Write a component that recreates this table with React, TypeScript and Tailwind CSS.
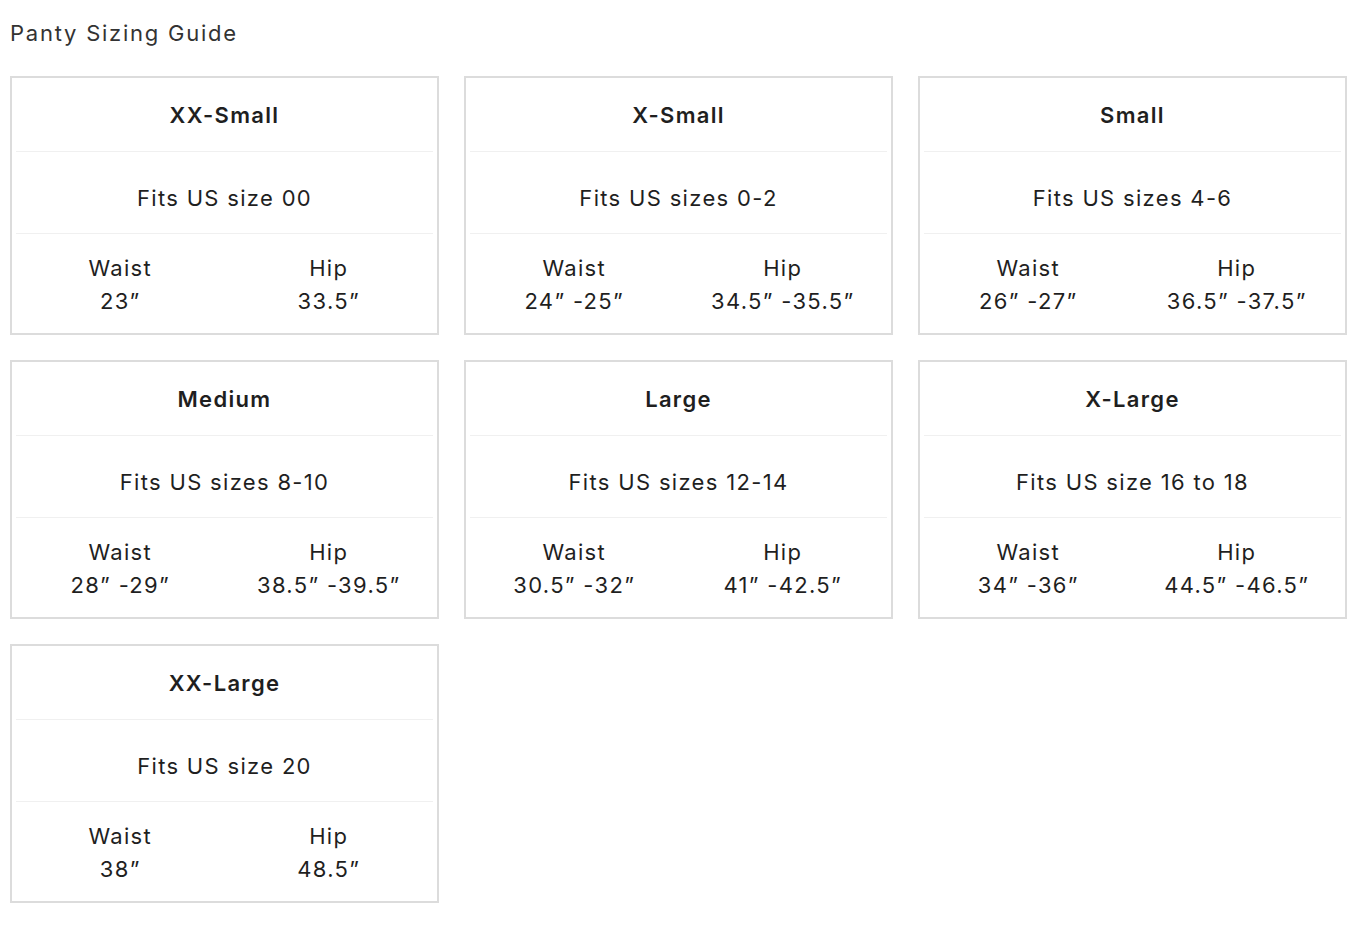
const sizes = [
  { name: "XX-Small", fits: "Fits US size 00", waist: "23”", hip: "33.5”" },
  { name: "X-Small", fits: "Fits US sizes 0-2", waist: "24” -25”", hip: "34.5” -35.5”" },
  { name: "Small", fits: "Fits US sizes 4-6", waist: "26” -27”", hip: "36.5” -37.5”" },
  { name: "Medium", fits: "Fits US sizes 8-10", waist: "28” -29”", hip: "38.5” -39.5”" },
  { name: "Large", fits: "Fits US sizes 12-14", waist: "30.5” -32”", hip: "41” -42.5”" },
  { name: "X-Large", fits: "Fits US size 16 to 18", waist: "34” -36”", hip: "44.5” -46.5”" },
  { name: "XX-Large", fits: "Fits US size 20", waist: "38”", hip: "48.5”" },
]

function SizeCard({ size }: { size: (typeof sizes)[number] }) {
  return (
    <div className="border-2 border-[#dcdcdc] px-1 text-center text-[#1f1f1f]">
      <div className="h-[74px] flex items-center justify-center border-b border-[#f0f0f0] pt-0.5">
        <h3 className="text-[22px] font-semibold tracking-[0.06em]">{size.name}</h3>
      </div>
      <div className="h-[82px] flex items-center justify-center border-b border-[#f0f0f0] pt-3">
        <p className="text-[22px] tracking-[0.06em]">{size.fits}</p>
      </div>
      <div className="h-[99px] grid grid-cols-2 items-center text-[22px] tracking-[0.06em] leading-[33px] pt-0.5">
        <div>
          <p>Waist</p>
          <p>{size.waist}</p>
        </div>
        <div>
          <p>Hip</p>
          <p>{size.hip}</p>
        </div>
      </div>
    </div>
  )
}

export default function App() {
  return (
    <div className="bg-white min-h-[930px] px-[10px] pt-[18px] font-['Inter',sans-serif]">
      <h2 className="text-[22px] tracking-[0.08em] text-[#333] leading-[30px]">Panty Sizing Guide</h2>
      <div className="mt-[28px] grid grid-cols-[429px_429px_429px] gap-x-[25px] gap-y-[25px]">
        {sizes.map((s) => (
          <SizeCard key={s.name} size={s} />
        ))}
      </div>
    </div>
  )
}
